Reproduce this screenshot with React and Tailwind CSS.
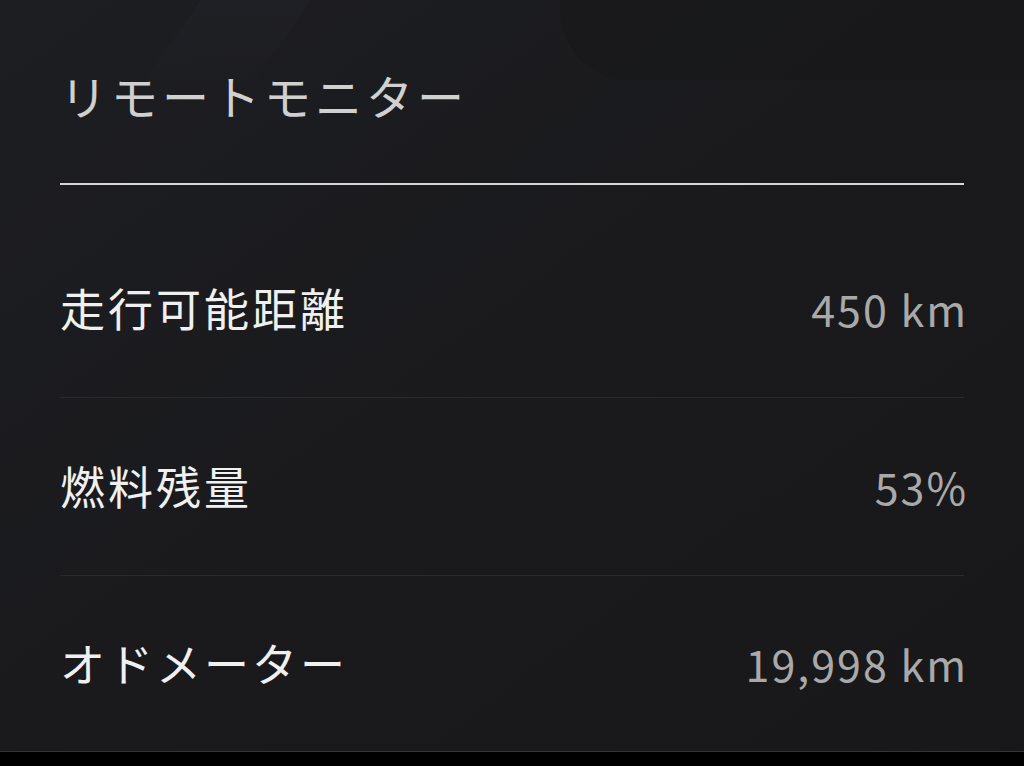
import React from "react";

const rows = [
  { label: "走行可能距離", value: "450 km" },
  { label: "燃料残量", value: "53%" },
  { label: "オドメーター", value: "19,998 km" },
];

const font = { fontFamily: '"Noto Sans CJK JP", "Noto Sans", sans-serif' };

export default function App() {
  return (
    <div className="w-[1024px] h-[766px] flex flex-col overflow-hidden bg-[#19191b]" style={font}>
      {/* main panel */}
      <div className="relative flex-1 px-[60px] bg-gradient-to-br from-[#1d1e22] via-[#1a1a1d] to-[#18181a]">
        {/* faint backdrop shapes */}
        <div className="pointer-events-none absolute left-[180px] top-[-40px] w-[110px] h-[140px] bg-gradient-to-b from-[#212227] to-transparent skew-x-[-35deg] opacity-80" />
        <div className="pointer-events-none absolute left-[560px] top-[-60px] w-[520px] h-[140px] rounded-[80px] bg-[#18181a] opacity-70" />

        <div className="relative">
          <div className="pt-[65px] h-[127px]">
            <h1 className="text-[47px] leading-[60px] tracking-[4px] font-normal text-[#d0d0d0]">
              リモートモニター
            </h1>
          </div>
          <div className="mt-[56px] h-[2px] bg-[#d6d6d6]" />

          <div className="mt-[35px]">
            {rows.map((r, i) => (
              <div key={r.label}>
                <div className={`${i === 2 ? "h-[175px]" : "h-[177px]"} pb-[2px] flex items-center justify-between`}>
                  <span className="text-[45px] leading-[60px] tracking-[3px] text-[#f0f0f0]">{r.label}</span>
                  <span className="text-[43px] leading-[60px] tracking-[2px] -mr-[4px] text-[#a9a9a9]">{r.value}</span>
                </div>
                {i < 2 && <div className="h-px bg-[#2a2a2d]" />}
              </div>
            ))}
          </div>
        </div>
      </div>

      {/* bottom bar */}
      <div className="h-[16px] bg-black border-t border-[#34343a]" />
    </div>
  );
}
